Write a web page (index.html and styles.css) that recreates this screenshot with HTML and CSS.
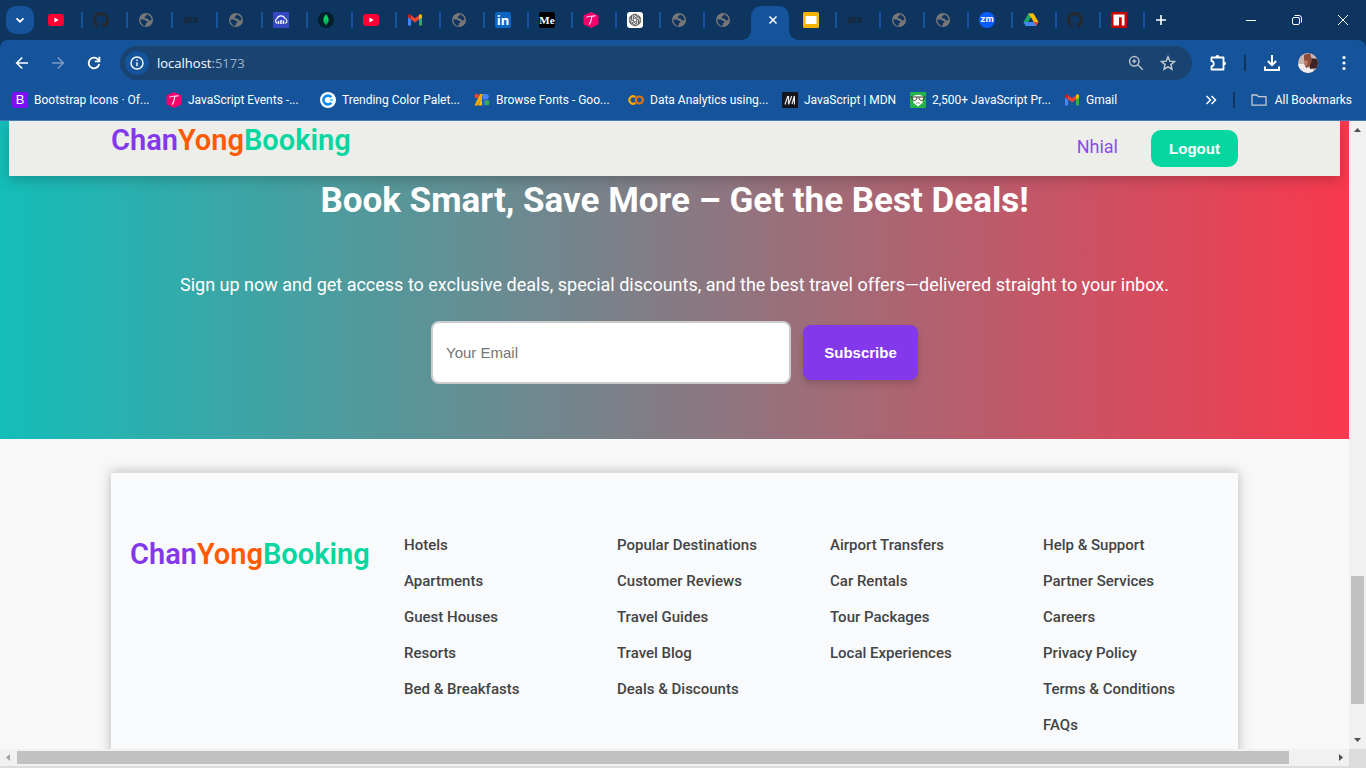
FILE: index.html
```
<!DOCTYPE html>
<html lang="en">
<head>
<meta charset="utf-8">
<meta name="viewport" content="width=device-width, initial-scale=1">
<title>ChanYongBooking</title>
<link rel="stylesheet" href="styles.css">
</head>
<body>
<svg class="sprite" aria-hidden="true">
  <symbol id="youtube" viewBox="0 0 16 16"><rect x="0" y="2" width="16" height="12" rx="3" fill="#ff0033"/><path d="M6.4 5.6v4.8L10.6 8z" fill="#fff"/></symbol>
  <symbol id="github" viewBox="0 0 16 16"><path fill="#24292f" d="M8 0C3.58 0 0 3.58 0 8c0 3.54 2.29 6.53 5.47 7.59.4.07.55-.17.55-.38 0-.19-.01-.82-.01-1.49-2.01.37-2.53-.49-2.69-.94-.09-.23-.48-.94-.82-1.13-.28-.15-.68-.52-.01-.53.63-.01 1.08.58 1.23.82.72 1.21 1.87.87 2.33.66.07-.52.28-.87.51-1.07-1.78-.2-3.64-.89-3.64-3.95 0-.87.31-1.59.82-2.15-.08-.2-.36-1.02.08-2.12 0 0 .67-.21 2.2.82.64-.18 1.32-.27 2-.27s1.36.09 2 .27c1.53-1.04 2.2-.82 2.2-.82.44 1.1.16 1.92.08 2.12.51.56.82 1.27.82 2.15 0 3.07-1.87 3.75-3.65 3.95.29.25.54.73.54 1.48 0 1.07-.01 1.93-.01 2.2 0 .21.15.46.55.38A8 8 0 0 0 16 8c0-4.42-3.58-8-8-8"/></symbol>
  <symbol id="globe" viewBox="0 0 16 16"><circle cx="8" cy="8" r="7" fill="#777"/><path fill="#0d3560" d="M8.400 2.600 9.400 2.600 12.600 4.800 13.600 7.600 12.400 8.600 10.600 8.200 10 6.800 8 6.600 6.600 5.600 6.800 4.400 8.400 4zM2.500 7.600h3.400l1.800 1.200 1.500.3.200 1.400-1.500.8-.2 2.200-1.700.4L4 12 2.600 9.800z"/></symbol>
  <symbol id="cloudinary" viewBox="0 0 16 16"><rect width="16" height="16" fill="#3448c5"/><path d="M4.300 11.300A2.500 2.500 0 0 1 3.900 6.700 4.300 4.300 0 0 1 11.900 6.500 2.500 2.500 0 0 1 12.300 11.300" fill="none" stroke="#fff" stroke-width="1.100"/><path d="M5.500 9v3M8 8V12M10.500 8.600V12" stroke="#fff" stroke-width="1.500"/></symbol>
  <symbol id="mongo" viewBox="0 0 16 16"><circle cx="8" cy="8" r="8" fill="#001e2b"/><path d="M8 2.300c3.300 3.500 3.600 7.400.4 10.200L8 14l-.4-1.500C4.400 9.700 4.800 5.700 8 2.300" fill="#00d35f"/><path d="M8 8v4.500" stroke="#007a4d" stroke-width=".8"/></symbol>
  <symbol id="gmail" viewBox="0 0 16 16"><path d="M1 4v9.500h3V7z" fill="#4285f4"/><path d="M15 4v9.500h-3V7z" fill="#34a853"/><path d="M1 4c0-2 2-2 3-1v4.500L1 5.600z" fill="#c5221f"/><path d="M15 4c0-2-2-2-3-1v4.500l3-1.900z" fill="#fbbc04"/><path d="M4 3.200 8 6.300l4-3.100v4.200l-4 3.100-4-3.100z" fill="#ea4335"/></symbol>
  <symbol id="slides" viewBox="0 0 16 16"><rect width="16" height="16" rx="1.500" fill="#f5b400"/><rect x="2.500" y="4" width="11" height="8" fill="#fff"/></symbol>
  <symbol id="tutorial" viewBox="0 0 16 16"><path d="M8 0 15.500 3.500V12.300L8 16 .5 12.300V3.500z" fill="#f6006b"/><path d="M3.500 5.400C4.500 3.600 8 4.800 12.500 3.600M8.800 4.600C8.600 7.500 7.800 10 6.300 12.600" fill="none" stroke="#ffd9ea" stroke-width="1.200"/></symbol>
  <symbol id="gpt" viewBox="0 0 16 16"><rect width="16" height="16" rx="3" fill="#fff"/><g fill="none" stroke="#333" stroke-width=".7"><path id="petal" d="M6.200 9V5L8.800 3.500c2.600-1.300 4.800 1.300 3.600 3.200M6.200 5c0-3 3.200-3.600 4.300-1.800"/><use href="#petal" transform="rotate(60 8 8)"/><use href="#petal" transform="rotate(120 8 8)"/><use href="#petal" transform="rotate(180 8 8)"/><use href="#petal" transform="rotate(240 8 8)"/><use href="#petal" transform="rotate(300 8 8)"/></g></symbol>
  <symbol id="drive" viewBox="0 0 16 16"><path d="M5.500 1.500h5L5.400 10 2.900 14 .5 10z" fill="#1ea362"/><path d="M5.500 1.500h5L15.500 10h-5z" fill="#fbbc04"/><path d="M3.100 10h12.400L13 14H2.900L.5 10z" fill="#4285f4"/><path d="M8 5.500 10.600 10H5.400z" fill="#0d3560"/><path d="M10.600 10h4.900L13 14z" fill="#ea4335"/></symbol>
  <symbol id="npm" viewBox="0 0 16 16"><rect width="16" height="16" fill="#c00"/><path d="M2.500 2.500h11v11h-2.700V5.300H8v8.200H2.500z" fill="#fff"/></symbol>
  <symbol id="coolors" viewBox="0 0 16 16"><circle cx="8" cy="8" r="8" fill="#fff"/><path d="M11.300 5.300a4.400 4.400 0 1 0 0 5.400" fill="none" stroke="#0a8cf5" stroke-width="2.600"/><circle cx="11.500" cy="8" r="1.300" fill="#35c3ff"/></symbol>
  <symbol id="gfonts" viewBox="0 0 16 16"><circle cx="2.600" cy="4" r="2.200" fill="#ea4335"/><path d="M6 2h3.500L4 13.500H.5z" fill="#f9ab00"/><path d="M8 4.500v9H4.500z" fill="#fbbc04"/><path d="M8.500 2H12a2.800 2.800 0 0 1 0 5.600H8.500z" fill="#4285f4"/><path d="M8.500 7.500H12a3 3 0 0 1 0 6H8.500z" fill="#1967d2"/><circle cx="13" cy="10.700" r="2.600" fill="#34a853"/></symbol>
  <symbol id="colab" viewBox="0 0 16 16"><path d="M7.300 5A3.700 3.700 0 1 0 7.300 11" fill="none" stroke="#f9ab00" stroke-width="2.200"/><circle cx="11.300" cy="8" r="3.500" fill="none" stroke="#e8710a" stroke-width="2.200"/></symbol>
  <symbol id="mdn" viewBox="0 0 16 16"><rect width="16" height="16" fill="#15141a"/><path d="M3 12.500 5.800 4M6.500 12.500V4M6.800 12 9.700 4M10 12 12.400 4v8.500" fill="none" stroke="#e8e8e8" stroke-width="1.200"/></symbol>
  <symbol id="gfg" viewBox="0 0 16 16"><rect width="16" height="16" fill="#27b34b"/><path d="M2.500 4.500Q8 .8 13.500 4.500L12.400 11 8 14.500 3.600 11z" fill="#fff"/><path d="M.5 5h15M2 5.500c0 4 5 4 5 0M9 5.500c0 4 5 4 5 0" fill="none" stroke="#222" stroke-width=".9"/><path d="M6 11.500q2-2 4 0" fill="none" stroke="#777" stroke-width=".8"/></symbol>
</svg>

<div class="browser">
  <div class="tabstrip">
    <button class="tab-search" aria-label="Search tabs"><svg width="10" height="10" viewBox="0 0 10 10"><path d="M1.500 3.300 5 6.700 8.500 3.300" fill="none" stroke="#fff" stroke-width="1.800"/></svg></button>
    <ul class="tabs">
      <li class="tab tab--wide"><svg class="favicon"><use href="#youtube"/></svg></li>
      <li class="tab tab--wide"><svg class="favicon"><use href="#github"/></svg></li>
      <li class="tab tab--wide"><svg class="favicon"><use href="#globe"/></svg></li>
      <li class="tab tab--wide"><span class="favicon favicon--alx">alx</span></li>
      <li class="tab tab--wide"><svg class="favicon"><use href="#globe"/></svg></li>
      <li class="tab tab--wide"><svg class="favicon"><use href="#cloudinary"/></svg></li>
      <li class="tab tab--wide"><svg class="favicon"><use href="#mongo"/></svg></li>
      <li class="tab"><svg class="favicon"><use href="#youtube"/></svg></li>
      <li class="tab"><svg class="favicon"><use href="#gmail"/></svg></li>
      <li class="tab"><svg class="favicon"><use href="#globe"/></svg></li>
      <li class="tab"><span class="favicon favicon--linkedin">in</span></li>
      <li class="tab"><span class="favicon favicon--medium">Me</span></li>
      <li class="tab"><svg class="favicon"><use href="#tutorial"/></svg></li>
      <li class="tab"><svg class="favicon"><use href="#gpt"/></svg></li>
      <li class="tab"><svg class="favicon"><use href="#globe"/></svg></li>
      <li class="tab tab--last"><svg class="favicon"><use href="#globe"/></svg></li>
      <li class="tab tab--active"><button class="tab-close" aria-label="Close tab"><svg width="10" height="10" viewBox="0 0 10 10"><path d="m1.500 1.500 7 7m0-7-7 7" stroke="#fff" stroke-width="1.500"/></svg></button></li>
      <li class="tab"><svg class="favicon"><use href="#slides"/></svg></li>
      <li class="tab"><span class="favicon favicon--alx">alx</span></li>
      <li class="tab"><svg class="favicon"><use href="#globe"/></svg></li>
      <li class="tab"><svg class="favicon"><use href="#globe"/></svg></li>
      <li class="tab"><span class="favicon favicon--zoom">zm</span></li>
      <li class="tab"><svg class="favicon"><use href="#drive"/></svg></li>
      <li class="tab"><svg class="favicon"><use href="#github"/></svg></li>
      <li class="tab"><svg class="favicon"><use href="#npm"/></svg></li>
    </ul>
    <button class="new-tab" aria-label="New tab"><svg width="12" height="12" viewBox="0 0 12 12"><path d="M6 1v10M1 6h10" stroke="#fff" stroke-width="1.600"/></svg></button>
    <div class="window-controls">
      <button aria-label="Minimize"><svg width="10" height="10" viewBox="0 0 10 10"><path d="M0 5.500h10" stroke="#fff"/></svg></button>
      <button aria-label="Restore"><svg width="10" height="10" viewBox="0 0 10 10" fill="none" stroke="#fff"><rect x=".5" y="2.500" width="7" height="7" rx="1.500"/><path d="M2.500.5H7A2.500 2.500 0 0 1 9.500 3v4.500"/></svg></button>
      <button aria-label="Close"><svg width="10" height="10" viewBox="0 0 10 10"><path d="m0 0 10 10M10 0 0 10" stroke="#fff"/></svg></button>
    </div>
  </div>

  <div class="toolbar">
    <button class="tool" aria-label="Back"><svg width="16" height="16" viewBox="0 0 16 16" fill="none" stroke="#fff" stroke-width="1.600"><path d="M14 8H3M8.200 2.500 2.700 8l5.500 5.500"/></svg></button>
    <button class="tool" aria-label="Forward" disabled><svg width="16" height="16" viewBox="0 0 16 16" fill="none" stroke="#7d9cc5" stroke-width="1.600"><path d="M2 8h11M7.800 2.500 13.300 8l-5.500 5.500"/></svg></button>
    <button class="tool" aria-label="Reload"><svg width="16" height="16" viewBox="0 0 16 16" fill="none" stroke="#fff" stroke-width="1.800"><path d="M13.200 9A5.300 5.300 0 1 1 11.900 4.400L13.500 6"/><path d="M13.400 1.800v4.600H8.800"/></svg></button>
    <div class="omnibox">
      <button class="site-info" aria-label="View site information"><svg width="14" height="14" viewBox="0 0 14 14" fill="none" stroke="#fff" stroke-width="1.400"><circle cx="7" cy="7" r="6"/><path d="M7 6.200v4M7 3.600v1.400"/></svg></button>
      <div class="address" role="textbox" aria-label="Address" contenteditable="true" spellcheck="false">localhost<span class="address-port">:5173</span></div>
      <button class="pill-action" aria-label="Zoom"><svg width="16" height="16" viewBox="0 0 16 16" fill="none" stroke="#b7bfc9" stroke-width="1.500"><circle cx="6.300" cy="6.300" r="4.700"/><path d="m9.800 9.800 5 5M6.300 4.300v4M4.300 6.300h4"/></svg></button>
      <button class="pill-action" aria-label="Bookmark this tab"><svg width="16" height="16" viewBox="0 0 16 16" fill="none" stroke="#c5c9cf" stroke-width="1.400"><path d="m8 1.800 1.800 4.300 4.700.4-3.600 3.100 1.100 4.600L8 11.800l-4 2.400 1.100-4.600L1.500 6.500l4.700-.4z"/></svg></button>
    </div>
    <div class="toolbar-actions">
      <button class="tool" aria-label="Extensions"><svg width="18" height="18" viewBox="0 0 18 18"><path d="M2.500 3.500h12v12h-12v-3.300c3 0 3-5 0-5z" fill="none" stroke="#fff" stroke-width="1.800" stroke-linejoin="round"/><path d="M6.600 3a1.900 1.900 0 0 1 3.800 0zM15 7.500a1.900 1.900 0 0 1 0 3.800z" fill="#fff"/></svg></button>
      <span class="divider"></span>
      <button class="tool" aria-label="Downloads"><svg width="16" height="16" viewBox="0 0 16 16" fill="none" stroke="#fff" stroke-width="2"><path d="M8 0v10M3.800 6 8 10.200 12.200 6M1 11.500V15h14v-3.500"/></svg></button>
      <button class="tool" aria-label="Profile"><svg width="20" height="20" viewBox="0 0 20 20"><defs><clipPath id="face"><circle cx="10" cy="10" r="10"/></clipPath></defs><g clip-path="url(#face)"><path fill="#c9b8b4" d="M0 0h20v20H0z"/><path fill="#f2ecee" d="M0 11h7l3 4 4-1 3 7H0z"/><path fill="#3d2324" d="M11 5l9 1v9l-8 1z"/><path fill="#8b4c3c" d="M6 2l6-2 2 7-2 6-4 2-2-5z"/><path fill="#b97e66" d="M6 7l4 1-1 5-3-2z"/></g></svg></button>
      <button class="tool" aria-label="Menu"><svg width="16" height="16" viewBox="0 0 16 16" fill="#fff"><circle cx="8" cy="2.500" r="1.600"/><circle cx="8" cy="8" r="1.600"/><circle cx="8" cy="13.500" r="1.600"/></svg></button>
    </div>
  </div>

  <nav class="bookmarks" aria-label="Bookmarks">
    <a class="bookmark" href="#"><span class="favicon favicon--bootstrap">B</span>Bootstrap Icons · Of...</a>
    <a class="bookmark" href="#"><svg class="favicon"><use href="#tutorial"/></svg>JavaScript Events -...</a>
    <a class="bookmark" href="#"><svg class="favicon"><use href="#coolors"/></svg>Trending Color Palet...</a>
    <a class="bookmark" href="#"><svg class="favicon"><use href="#gfonts"/></svg>Browse Fonts - Goo...</a>
    <a class="bookmark" href="#"><svg class="favicon"><use href="#colab"/></svg>Data Analytics using...</a>
    <a class="bookmark bookmark--short" href="#"><svg class="favicon"><use href="#mdn"/></svg>JavaScript | MDN</a>
    <a class="bookmark" href="#"><svg class="favicon"><use href="#gfg"/></svg>2,500+ JavaScript Pr...</a>
    <a class="bookmark bookmark--auto" href="#"><svg class="favicon"><use href="#gmail"/></svg>Gmail</a>
    <div class="bookmarks-end">
      <button class="more" aria-label="More bookmarks"><svg width="12" height="10" viewBox="0 0 12 10" fill="none" stroke="#fff" stroke-width="1.500"><path d="m1.500 1 4 4-4 4M6.500 1l4 4-4 4"/></svg></button>
      <span class="divider"></span>
      <a class="bookmark bookmark--auto bookmark--all" href="#"><svg class="favicon" viewBox="0 0 16 16"><path d="M1 13.200V3h5l1.500 1.700H15v8.500z" fill="none" stroke="#c5cad1" stroke-width="1.300" stroke-linejoin="round"/></svg>All Bookmarks</a>
    </div>
  </nav>

  <div class="viewport">
    <div class="page">
      <header class="site-header">
        <a class="brand" href="#"><span class="brand-chan">Chan</span><span class="brand-yong">Yong</span><span class="brand-booking">Booking</span></a>
        <div class="account">
          <a class="user" href="#">Nhial</a>
          <button class="logout">Logout</button>
        </div>
      </header>

      <section class="deals">
        <h1>Book Smart, Save More – Get the Best Deals!</h1>
        <p>Sign up now and get access to exclusive deals, special discounts, and the best travel offers—delivered straight to your inbox.</p>
        <form class="subscribe">
          <input type="email" placeholder="Your Email" aria-label="Your Email">
          <button type="submit">Subscribe</button>
        </form>
      </section>

      <footer class="site-footer">
        <a class="brand" href="#"><span class="brand-chan">Chan</span><span class="brand-yong">Yong</span><span class="brand-booking">Booking</span></a>
        <ul class="links">
          <li><a href="#">Hotels</a></li>
          <li><a href="#">Apartments</a></li>
          <li><a href="#">Guest Houses</a></li>
          <li><a href="#">Resorts</a></li>
          <li><a href="#">Bed &amp; Breakfasts</a></li>
        </ul>
        <ul class="links">
          <li><a href="#">Popular Destinations</a></li>
          <li><a href="#">Customer Reviews</a></li>
          <li><a href="#">Travel Guides</a></li>
          <li><a href="#">Travel Blog</a></li>
          <li><a href="#">Deals &amp; Discounts</a></li>
        </ul>
        <ul class="links">
          <li><a href="#">Airport Transfers</a></li>
          <li><a href="#">Car Rentals</a></li>
          <li><a href="#">Tour Packages</a></li>
          <li><a href="#">Local Experiences</a></li>
        </ul>
        <ul class="links">
          <li><a href="#">Help &amp; Support</a></li>
          <li><a href="#">Partner Services</a></li>
          <li><a href="#">Careers</a></li>
          <li><a href="#">Privacy Policy</a></li>
          <li><a href="#">Terms &amp; Conditions</a></li>
          <li><a href="#">FAQs</a></li>
        </ul>
      </footer>
    </div>

    <div class="scrollbar scrollbar--vertical" aria-hidden="true">
      <svg class="scroll-arrow" viewBox="0 0 17 17"><path d="M5 11h7L8.500 7z" fill="#505050"/></svg>
      <div class="scroll-track scroll-track--vertical"><div class="scroll-thumb"></div></div>
      <svg class="scroll-arrow" viewBox="0 0 17 17"><path d="M5 6h7l-3.500 4z" fill="#505050"/></svg>
    </div>
    <div class="scrollbar scrollbar--horizontal" aria-hidden="true">
      <svg class="scroll-arrow" viewBox="0 0 17 17"><path d="M10 5v7L6 8.500z" fill="#a3a3a3"/></svg>
      <div class="scroll-track scroll-track--horizontal"><div class="scroll-thumb"></div></div>
      <svg class="scroll-arrow" viewBox="0 0 17 17"><path d="M7 5v7l4-3.500z" fill="#505050"/></svg>
    </div>
    <div class="scroll-corner"></div>
  </div>
</div>
</body>
</html>
```
FILE: styles.css
```
* {
  box-sizing: border-box;
}

body {
  margin: 0;
  font-family: Roboto, sans-serif;
}

button {
  padding: 0;
  border: 0;
  background: none;
  font: inherit;
  color: inherit;
}

a {
  color: inherit;
  text-decoration: none;
}

ul {
  margin: 0;
  padding: 0;
  list-style: none;
}

svg {
  display: block;
  flex: none;
}

.sprite {
  position: absolute;
  width: 0;
  height: 0;
}

/* Browser frame */

.browser {
  display: flex;
  flex-direction: column;
  height: 100vh;
  overflow: hidden;
  background: #0d3560;
  color: #fff;
}

.tabstrip {
  display: flex;
  align-items: center;
  flex: none;
  height: 40px;
  padding-left: 6px;
}

.tab-search {
  display: grid;
  place-items: center;
  width: 28px;
  height: 28px;
  margin-right: 8px;
  border-radius: 10px;
  background: #15539a;
}

.tabs {
  display: flex;
  align-self: stretch;
}

.tab {
  display: flex;
  align-items: center;
  justify-content: space-between;
  width: 44px;
  padding: 0 4px 0 6px;
}

.tab--wide {
  width: 45px;
}

.tab::after {
  content: "";
  width: 2px;
  height: 16px;
  background: #15539a;
}

.tab--last::after {
  display: none;
}

.tab--active {
  position: relative;
  justify-content: center;
  width: 38px;
  height: 34px;
  margin: 6px 8px 0 -2px;
  padding: 0 0 6px 6px;
  border-radius: 10px 10px 0 0;
  background: #15539a;
}

.tab--active::before,
.tab--active::after {
  content: "";
  position: absolute;
  bottom: 0;
  width: 10px;
  height: 10px;
}

.tab--active::before {
  right: 100%;
  background: radial-gradient(circle at 0 0, transparent 10px, #15539a 10px);
}

.tab--active::after {
  left: 100%;
  background: radial-gradient(circle at 100% 0, transparent 10px, #15539a 10px);
}

.favicon {
  display: block;
  flex: none;
  width: 16px;
  height: 16px;
  line-height: 16px;
  text-align: center;
}

.favicon--alx {
  color: #1d2733;
  font: 700 10px/15px "Open Sans", sans-serif;
}

.favicon--linkedin {
  border-radius: 2px;
  background: #0a66c2;
  font: 700 13px/16px "Open Sans", sans-serif;
}

.favicon--medium {
  border-radius: 2px;
  background: #000;
  font: 700 11px/16px "Liberation Serif", serif;
}

.favicon--zoom {
  border-radius: 50%;
  background: #0b5cff;
  font: 700 9px/14px Inter, sans-serif;
}

.favicon--bootstrap {
  border-radius: 2px;
  background: #7d10f8;
  font: 400 13px/16px "Liberation Sans", sans-serif;
}

.new-tab {
  display: grid;
  place-items: center;
  width: 24px;
  height: 24px;
}

.window-controls {
  display: flex;
  margin-left: auto;
}

.window-controls button {
  display: grid;
  place-items: center;
  width: 46px;
  height: 40px;
}

.toolbar {
  display: flex;
  align-items: center;
  flex: none;
  gap: 8px;
  height: 46px;
  padding: 0 8px;
  border-radius: 8px 8px 0 0;
  background: #15539a;
}

.tool {
  display: grid;
  place-items: center;
  width: 28px;
  height: 28px;
}

.omnibox {
  display: flex;
  align-items: center;
  flex: 1;
  height: 34px;
  margin-left: 4px;
  padding: 0 8px 0 5px;
  border-radius: 17px;
  background: #194472;
}

.site-info {
  display: grid;
  place-items: center;
  width: 24px;
  height: 24px;
  margin-right: 8px;
  border-radius: 50%;
  background: #15539a;
}

.address {
  flex: 1;
  font: 13px/20px "Open Sans", sans-serif;
}

.address-port {
  color: #9fb0c6;
}

.pill-action {
  display: grid;
  place-items: center;
  width: 32px;
  height: 28px;
}

.toolbar-actions {
  display: flex;
  align-items: center;
  gap: 8px;
  padding-left: 4px;
}

.divider {
  width: 2px;
  height: 16px;
  margin: 0 4px;
  background: #0d3560;
}

.bookmarks {
  display: flex;
  flex: none;
  align-items: center;
  height: 35px;
  padding: 0 14px 7px 12px;
  border-bottom: 1px solid #4a78b3;
  background: #15539a;
  font-size: 12px;
  line-height: 16px;
}

.bookmark {
  display: flex;
  flex: none;
  align-items: center;
  gap: 6px;
  width: 154px;
  white-space: nowrap;
}

.bookmark--short {
  width: 128px;
}

.bookmark--auto {
  width: auto;
}

.bookmark--all {
  gap: 8px;
}

.bookmarks-end {
  display: flex;
  align-items: center;
  gap: 12px;
  margin-left: auto;
}

/* Page viewport with scrollbars */

.viewport {
  display: grid;
  flex: 1;
  grid-template-columns: 1fr 17px;
  grid-template-rows: 1fr 17px;
  min-height: 0;
  padding-bottom: 2px;
  background: #dcdcdc;
}

.page {
  position: relative;
  overflow: hidden;
  background: #f8f8f8;
}

.scrollbar {
  display: flex;
  background: #f1f1f1;
}

.scrollbar--vertical {
  flex-direction: column;
}

.scroll-arrow {
  width: 17px;
  height: 17px;
}

.scroll-track {
  display: grid;
  flex: 1;
}

.scroll-track--vertical {
  grid-template-rows: 438fr 128fr 28fr;
  padding: 0 2px;
}

.scroll-track--vertical .scroll-thumb {
  grid-row: 2;
}

.scroll-track--horizontal {
  grid-template-columns: 1272fr 43fr;
  padding: 2px 0;
}

.scroll-thumb {
  background: #c1c1c1;
}

.scroll-corner {
  background: #dcdcdc;
}

/* Site header, pinned over the page */

.site-header {
  position: absolute;
  top: 0;
  right: 9px;
  left: 9px;
  display: flex;
  justify-content: space-between;
  align-items: flex-start;
  padding: 0 102px 9px;
  background: #edeee9;
  box-shadow: 0 4px 12px rgba(0, 0, 0, 0.2);
}

.brand {
  font-size: 29px;
  font-weight: 600;
  line-height: 38px;
}

.brand-chan {
  color: #8338ec;
}

.brand-yong {
  color: #ff5a00;
}

.brand-booking {
  color: #06d6a0;
}

.account {
  display: flex;
  align-items: flex-start;
  gap: 33px;
  padding-top: 9px;
}

.user {
  color: #8338ec;
  font-size: 18px;
  line-height: 34px;
  opacity: 0.9;
}

.logout {
  width: 87px;
  height: 37px;
  border-radius: 10px;
  background: #06d6a0;
  color: #fff;
  font: 700 15px/20px "Liberation Sans", Arial, sans-serif;
}

/* Newsletter */

.deals {
  display: flex;
  flex-direction: column;
  align-items: center;
  padding: 59px 24px 55px;
  background: linear-gradient(90deg, #14bdb9, #f8384e);
  color: #fff;
  text-align: center;
}

.deals h1 {
  margin: 0 0 53px;
  font-size: 35px;
  font-weight: 700;
  line-height: 42px;
}

.deals p {
  margin: 0 0 26px;
  font-size: 18px;
  line-height: 20px;
}

.subscribe {
  display: flex;
  align-items: center;
  gap: 12px;
}

.subscribe input {
  width: 360px;
  height: 63px;
  padding: 0 13px;
  border: 2px solid #ccc;
  border-radius: 8px;
  background: #fff;
  font: 15px/20px "Liberation Sans", Arial, sans-serif;
}

.subscribe input::placeholder {
  color: #757575;
}

.subscribe button {
  width: 115px;
  height: 55px;
  border-radius: 8px;
  background: #8338ec;
  box-shadow: 0 4px 6px rgba(0, 0, 0, 0.15);
  font: 700 15px/20px "Liberation Sans", Arial, sans-serif;
}

/* Footer */

.site-footer {
  display: grid;
  grid-template-columns: 237px repeat(4, 1fr);
  gap: 37px;
  margin: 33px 111px 0;
  padding: 62px 19px;
  border-top: 1px solid #ddd;
  background: #f8fafc;
  box-shadow: 0 0 12px rgba(0, 0, 0, 0.25);
  color: #444;
}

.links {
  display: grid;
  align-content: start;
  gap: 16px;
  font-size: 15px;
  font-weight: 500;
  line-height: 20px;
  white-space: nowrap;
}
```
